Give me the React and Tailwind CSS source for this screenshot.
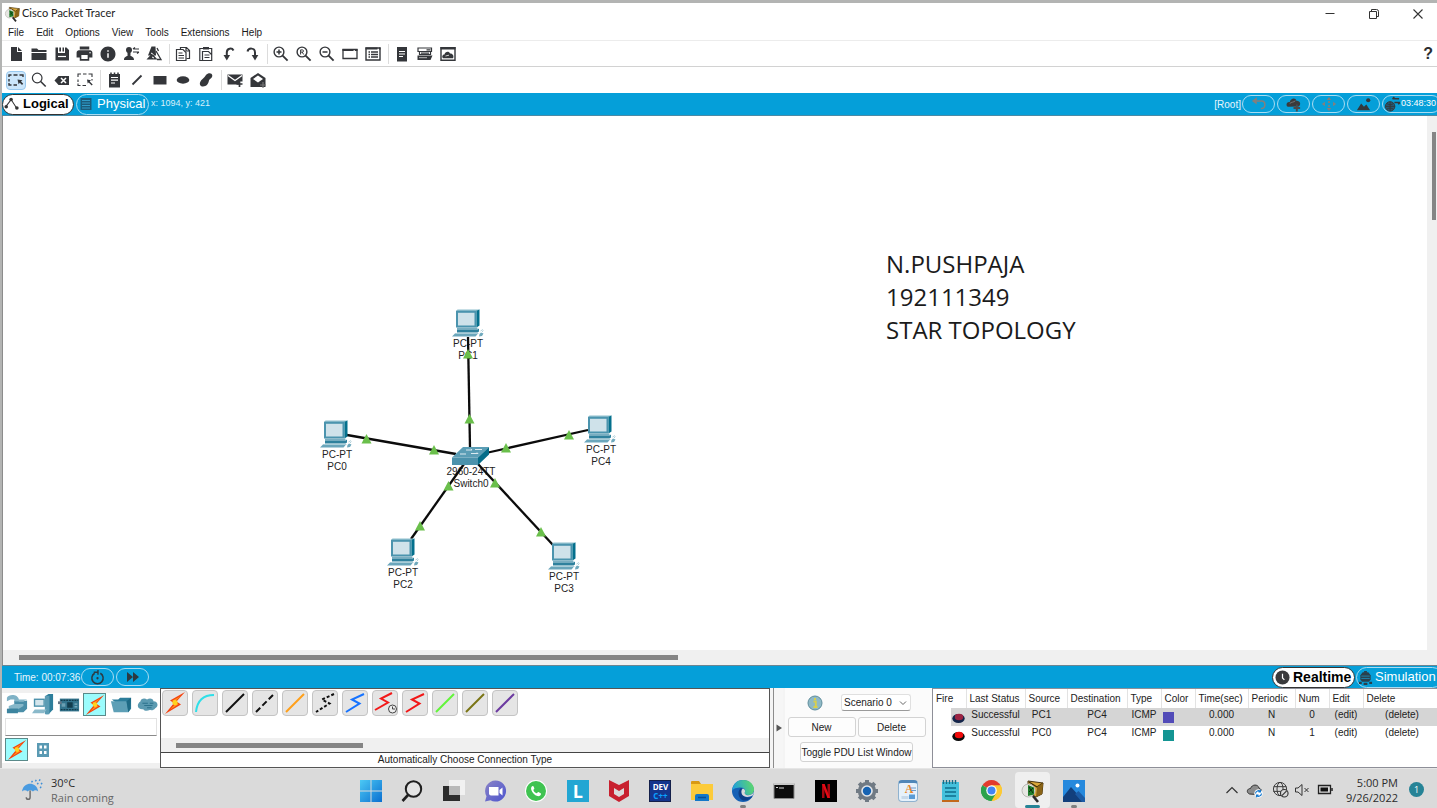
import React from 'react';
import { MdPrint, MdInfo } from 'react-icons/md';
import { FaWhatsapp } from 'react-icons/fa';

const INK = '#34363a';

function Svg({ s = 18, box = 18, children, className }) {
  return (
    <svg
      width={s}
      height={s}
      viewBox={`0 0 ${box} ${box}`}
      fill="none"
      aria-hidden="true"
      className={className || 'shrink-0'}
    >
      {children}
    </svg>
  );
}

/* ---------- toolbar icons ---------- */

const NewIcon = () => (
  <Svg>
    <path d="M4 2h6v5h5v9H4z" fill={INK} />
    <path d="M11 2l4 4h-4z" fill={INK} />
  </Svg>
);
const OpenIcon = () => (
  <Svg>
    <path d="M1.500 3.500h5.500l1.500 1.500h8v2H1.500z" fill={INK} />
    <path d="M1.500 8h15v7h-15z" fill={INK} />
  </Svg>
);
const SaveIcon = () => (
  <Svg>
    <path d="M2.500 2.500H5V8h7V2.500h1.500l2.500 2.500v10.500H2.500z" fill={INK} />
    <path d="M6.300 2.500h1.700v4H6.300zM9.500 2.500h1.500v4H9.500z" fill={INK} />
    <path d="M5 11.500h8" stroke="#fff" strokeWidth="1.200" />
  </Svg>
);
const PrintIcon = () => <MdPrint size={19} color={INK} />;
const InfoIcon = () => <MdInfo size={18} color={INK} />;
const UserIcon = () => (
  <Svg>
    <circle cx="7" cy="5" r="3" fill={INK} />
    <path d="M5.500 6h3v5h-3zM2 15c0-3 2-3.600 5-4.400 3 .8 5 1.400 5 4.400z" fill={INK} />
    <path d="M11 4h6M11 4l2-1.500M11 7h6M17 7l-2 1.500" stroke={INK} strokeWidth="1.200" />
  </Svg>
);
const WizardIcon = () => (
  <Svg>
    <path d="M6.500 1.500l4 0 .5 9H3z" fill={INK} />
    <path d="M1.500 14.500l4-4.500h3l4 4.500z" fill={INK} />
    <path d="M6 8l2.500 1.500M7 12l2 1" stroke="#fff" />
    <path d="M11 6l5 8.500h-4M12 3l1.500 3" stroke={INK} strokeWidth="1.300" />
  </Svg>
);
const CopyIcon = () => (
  <Svg>
    <path d="M6.500 4.500v-2h6l3 3v8h-3M12 2.500v3.500h3.500" stroke={INK} strokeWidth="1.200" />
    <path d="M2.500 4.500h6.500l3 3v8H2.500zM4.500 8h4M4.500 10.500h5.500M4.500 13h5.500" stroke={INK} strokeWidth="1.200" />
  </Svg>
);
const PasteIcon = () => (
  <Svg>
    <path d="M6 3.500H2.800v12H5M11 3.500h3.700v12H5.500v-9h6l3 3" stroke={INK} strokeWidth="1.200" />
    <path d="M6 2h6v2.500H6z" fill={INK} />
    <path d="M7.500 10h5M7.500 12.500h5" stroke={INK} />
  </Svg>
);
const UndoIcon = () => (
  <Svg>
    <path d="M13.500 5.500C12 2.500 6.800 3 6.800 7.500V11" stroke={INK} strokeWidth="2" />
    <path d="M3.500 10h6.600l-3.300 5.500z" fill={INK} />
  </Svg>
);
const RedoIcon = () => (
  <Svg>
    <path d="M4.500 6.500C5.500 2.500 12 2.500 12 7.500V11" stroke={INK} strokeWidth="2" />
    <path d="M8.700 10h6.600L12 15.500z" fill={INK} />
  </Svg>
);
function Lens({ children }) {
  return (
    <Svg>
      <circle cx="7" cy="7" r="4.900" stroke={INK} strokeWidth="1.400" />
      <path d="M10.600 10.600l5 5" stroke={INK} strokeWidth="1.800" />
      {children}
    </Svg>
  );
}
const ZoomInIcon = () => (
  <Lens>
    <path d="M4.500 7h5M7 4.500v5" stroke={INK} strokeWidth="1.500" />
  </Lens>
);
const ZoomOutIcon = () => (
  <Lens>
    <path d="M4.500 7h5" stroke={INK} strokeWidth="1.500" />
  </Lens>
);
const ZoomResetIcon = () => (
  <Lens>
    <path d="M5.600 9.500V4.900h1.900c1.300 0 1.300 2.200 0 2.200H6M7.200 7.100l1.500 2.400" stroke={INK} />
  </Lens>
);
const WindowIcon = () => (
  <Svg>
    <path d="M2 4.500h14v9H2z" stroke={INK} strokeWidth="1.300" />
    <path d="M1.500 4h11v2h-11zM14 4h2.500v2H14z" fill={INK} />
  </Svg>
);
const ListWindowIcon = () => (
  <Svg>
    <path d="M2 3h14v12H2z" stroke={INK} strokeWidth="1.400" />
    <path d="M1.500 2.500h12v2h-12zM15 2.500h1.500v2H15z" fill={INK} />
    <path d="M4.500 7h1.500M7 7h7M4.500 9.500h1.500M7 9.500h7M4.500 12h1.500M7 12h7" stroke={INK} strokeWidth="1.300" />
  </Svg>
);
const NoteIcon = () => (
  <Svg>
    <path d="M4 2h10v14.500H4z" fill={INK} />
    <path d="M6 6.500h6M6 9h6M6 11.500h4" stroke="#fff" strokeWidth="1.100" />
  </Svg>
);
const DevicesIcon = () => (
  <Svg>
    <path d="M2 3h13.500v3.500H2zM3.500 6.500v3h11v-3" stroke={INK} strokeWidth="1.200" />
    <path d="M10.500 4.800h4M5 8.200h8" stroke={INK} strokeWidth="1.300" />
    <path d="M1.500 10.500h15l-2 4.500h-13z" fill={INK} />
    <path d="M3 12.700h8" stroke="#bbb" />
  </Svg>
);
const CloudWindowIcon = () => (
  <Svg>
    <path d="M2 2.800h14v12.500H2z" stroke={INK} strokeWidth="1.400" />
    <path d="M1.500 2h15v2.500h-15z" fill={INK} />
    <path d="M4 13.300c-1.700-2 0-4 1.500-3.800C6 6.300 10.300 6 11 8.500c2.400-.4 4.400 2.500 3 4.800z" fill={INK} />
    <path d="M6.500 11l3.500-.8" stroke="#ccc" />
  </Svg>
);
const SelectIcon = () => (
  <Svg>
    <path
      d="M2 6V4h2.500M6.500 4h4M12.500 4H16v2M2 8v2.500M2 12v2h2.500M6.500 14h3.500"
      stroke={INK}
      strokeWidth="1.400"
    />
    <path d="M10.500 8.500l5 .8-1.500 1.200 2.200 2.300-1.200 1.200-2.200-2.300-1.200 1.500z" fill={INK} />
  </Svg>
);
const InspectIcon = () => (
  <Svg>
    <circle cx="7.200" cy="7" r="4.800" stroke={INK} strokeWidth="1.200" />
    <path d="M10.700 10.500l5 5" stroke={INK} strokeWidth="1.600" />
  </Svg>
);
const DeleteIcon = () => (
  <Svg>
    <path d="M1.500 9.500l4-4.500H16v9H5.500z" fill={INK} />
    <path d="M8 7l5 5M13 7l-5 5" stroke="#fff" strokeWidth="1.500" />
  </Svg>
);
const ResizeIcon = () => (
  <Svg>
    <path
      d="M2 6V3h3M7 3h3.500M12.500 3H16v3M2 8.500v2.500M2 12.500v2h2.500M6.500 14.500h3.500M16 8v1.500"
      stroke={INK}
      strokeWidth="1.100"
    />
    <path d="M11 8.500l4 .8-1.300 1.100 3 3-1 1-3-3-1 1.200z" fill={INK} />
  </Svg>
);
const PlaceNoteIcon = () => (
  <Svg>
    <path d="M4 3h11v13.500H4z" fill={INK} />
    <path d="M6 1.500v2M9.500 1.500v2M13 1.500v2" stroke={INK} strokeWidth="1.500" />
    <path d="M6 6.500h7M6 9.200h7M6 12h4" stroke="#fff" strokeWidth="1.200" />
  </Svg>
);
const LineIcon = () => (
  <Svg>
    <path d="M4.500 13.500l9-9" stroke={INK} strokeWidth="1.800" />
  </Svg>
);
const RectIcon = () => (
  <Svg>
    <path d="M2.500 5h13v8.500h-13z" fill={INK} />
  </Svg>
);
const EllipseIcon = () => (
  <Svg>
    <ellipse cx="9" cy="9" rx="6.300" ry="3.700" fill={INK} />
  </Svg>
);
const FreeformIcon = () => (
  <Svg>
    <path
      d="M9 4c2-2.500 6-2.500 6.300.5.200 2.500-2.500 3-3.300 5-.5 3-2.500 6-6 6-2.500 0-3.800-2-2.800-4.500C4 8.700 7.500 7 9 4z"
      fill={INK}
    />
  </Svg>
);
const MailAddIcon = () => (
  <Svg>
    <path d="M1.500 3.500h15v7h-2.500v3H1.500z" fill={INK} />
    <path d="M2 4.500l7 5 7-5" stroke="#fff" strokeWidth="1.300" />
    <path d="M13.500 10v6M10.500 13h6" stroke={INK} strokeWidth="1.700" />
  </Svg>
);
const MailOpenIcon = () => (
  <Svg>
    <path d="M1.500 7L9 2l7.500 5v9h-15z" fill={INK} />
    <path d="M4 8l5-3.500L14 8l-5 3.500z" fill="#fff" />
    <path d="M14 11v6M11 14h6" stroke="#777" strokeWidth="1.200" />
  </Svg>
);

const mainTools = [
  [
    ['New', NewIcon],
    ['Open', OpenIcon],
    ['Save', SaveIcon],
    ['Print', PrintIcon],
    ['Network information', InfoIcon],
    ['User profile', UserIcon],
    ['Activity wizard', WizardIcon],
  ],
  [
    ['Copy', CopyIcon],
    ['Paste', PasteIcon],
    ['Undo', UndoIcon],
    ['Redo', RedoIcon],
  ],
  [
    ['Zoom in', ZoomInIcon],
    ['Zoom reset', ZoomResetIcon],
    ['Zoom out', ZoomOutIcon],
    ['Viewport', WindowIcon],
    ['Workspace list', ListWindowIcon],
  ],
  [
    ['Command log', NoteIcon],
    ['Custom devices', DevicesIcon],
    ['Cluster view', CloudWindowIcon],
  ],
];

const drawTools = [
  [
    ['Select', SelectIcon],
    ['Inspect', InspectIcon],
    ['Delete', DeleteIcon],
    ['Resize', ResizeIcon],
  ],
  [
    ['Place note', PlaceNoteIcon],
    ['Line', LineIcon],
    ['Rectangle', RectIcon],
    ['Ellipse', EllipseIcon],
    ['Freeform', FreeformIcon],
  ],
  [
    ['Add simple PDU', MailAddIcon],
    ['Add complex PDU', MailOpenIcon],
  ],
];

function ToolGroups({ groups, selected }) {
  return (
    <div className="flex items-center pl-0.5">
      {groups.map((g, i) => (
        <React.Fragment key={i}>
          {i > 0 && <span className="ml-1 mr-px h-5 w-px bg-[#dcdcdc]" />}
          {g.map(([name, Icon]) => (
            <button
              key={name}
              type="button"
              aria-label={name}
              className="flex h-5 w-[23px] items-center justify-center"
            >
              <span
                className={
                  name === selected
                    ? 'flex h-[19px] w-5 items-center justify-center rounded-sm border border-[#99c9ef] bg-[#cce6fb]'
                    : 'flex'
                }
              >
                <Icon />
              </span>
            </button>
          ))}
        </React.Fragment>
      ))}
    </div>
  );
}

function TracerLogo({ s }) {
  return (
    <Svg s={s} box={24}>
      <path d="M8 2l15 2-1 11-6 3-8-4z" fill="#d9a73a" stroke="#4a3510" strokeWidth="1" />
      <path d="M9 3l8 5 6-4" stroke="#3c2a08" strokeWidth="1.200" />
      <path d="M17 8l-1 10 6-3 1-11z" fill="#8a6417" />
      <circle cx="8.500" cy="11.500" r="6.500" fill="#e6e6e2" stroke="#b9b9b4" />
      <path d="M8 6l6 2.500v7L8 17z" fill="#1f7d2c" />
      <path d="M9 8l4 6M9 13l4-4" stroke="#0c2f10" />
      <path d="M13 17l5 6" stroke="#2b2b2b" strokeWidth="2.600" />
    </Svg>
  );
}

/* ---------- workspace ---------- */

const devices = [
  { id: 'PC1', x: 452, y: 309, label: 'left-[465px] top-[222px]' },
  { id: 'PC0', x: 320, y: 420, label: 'left-[334px] top-[333px]' },
  { id: 'PC4', x: 584, y: 415, label: 'left-[598px] top-[328px]' },
  { id: 'PC2', x: 387, y: 538, label: 'left-[400px] top-[451px]' },
  { id: 'PC3', x: 548, y: 542, label: 'left-[561px] top-[455px]' },
];
const links = [
  [468, 337, 470, 448],
  [347, 435, 456, 454],
  [588, 430, 486, 453],
  [411, 539, 464, 464],
  [553, 545, 478, 464],
];
const arrows = [
  [468, 349],
  [469.5, 414],
  [366.5, 434],
  [434, 445],
  [506, 443],
  [569, 430],
  [448.5, 481],
  [420, 521],
  [495, 478],
  [541, 527],
];

function Pc({ x, y }) {
  return (
    <g transform={`translate(${x} ${y})`}>
      <path d="M4 2l1.500-1.500H28L25 2z" fill="#8fbfce" />
      <path d="M4 1.800h20.500V18.500H4z" fill="#4b94ae" />
      <path d="M6 3.800h16.500V16.500H6z" fill="#cfe2ea" />
      <path d="M24.500 1.800L27.500 .5v16l-3 2z" fill="#04708d" />
      <path d="M5 18.500h20.500v2H5z" fill="#79aec1" />
      <path d="M5 20.500h20.500l1.500-1v3l-1.500 1H5z" fill="#2f819d" />
      <path d="M3.500 24H26.500l-3 3.500H0z" fill="#6aa6bb" />
      <path d="M3.500 24H26.500l-.9 1H2.600z" fill="#a9cdd8" />
      <path d="M27.500 25l1.500-1.500 2.500 1-1.500 2.500-3 .5z" fill="#6fa9bd" />
      <path d="M28.500 22l2.500-1.500M30 23l1.500-1.500" stroke="#9fc5d2" strokeWidth=".8" />
    </g>
  );
}

const labelCls =
  'absolute -translate-x-1/2 whitespace-nowrap text-center text-[10px] leading-3 text-[#222]';

function Canvas() {
  return (
    <div className="relative min-w-0 flex-1 overflow-hidden border-l border-[#8c8c8c] bg-white">
      {devices.map((d) => (
        <div key={d.id} className={`${labelCls} ${d.label}`}>
          PC-PT
          <br />
          {d.id}
        </div>
      ))}
      <div className={`${labelCls} left-[468px] top-[350px]`}>
        2960-24TT
        <br />
        Switch0
      </div>
      <svg
        className="absolute left-0 top-0"
        width="700"
        height="534"
        viewBox="3 116 700 534"
        role="img"
        aria-label="Star topology: five PCs linked to Switch0"
      >
        {links.map(([a, b, c, d]) => (
          <path key={`${a}-${b}`} d={`M${a} ${b}L${c} ${d}`} stroke="#0b0b0b" strokeWidth="2.300" />
        ))}
        {devices.map((d) => (
          <Pc key={d.id} x={d.x} y={d.y} />
        ))}
        <path d="M463 447h26l-11 10.500h-26z" fill="#5a9db5" />
        <path d="M452 457.500h26v7.500h-26z" fill="#4b92ac" />
        <path d="M478 457.500L489 447v7.500L478 465z" fill="#066d89" />
        <path d="M466 450h6l-1-1.200M475 449.500h7M460 454h6M471 453.500h7l-1-1" stroke="#dbeaf0" strokeWidth="1" fill="none" />
        {arrows.map(([x, y]) => (
          <path key={`${x}-${y}`} d={`M${x} ${y}l5 9.600h-10z`} fill="#6abf4b" />
        ))}
      </svg>
      <p className="absolute left-[883px] top-[131px] whitespace-nowrap font-['Open_Sans','Noto_Sans',sans-serif] text-[24px] leading-[33px] text-[#1b1b1b]">
        N.PUSHPAJA
        <br />
        192111349
        <br />
        STAR TOPOLOGY
      </p>
    </div>
  );
}

/* ---------- blue bars ---------- */

function Pill({ name, children, wide }) {
  return (
    <button
      type="button"
      aria-label={name}
      className={`flex h-[18px] shrink-0 items-center rounded-full border border-[#a9dcf2] text-white ${
        wide ? '-mr-1 w-[59px] whitespace-nowrap pl-px text-[9px]' : 'w-[33px] justify-center'
      }`}
    >
      {children}
    </button>
  );
}

function TopBar() {
  return (
    <div className="flex h-[23px] items-center overflow-hidden border-b border-[#4b8aa5] bg-[#059fd9] text-[10px]">
      <button
        type="button"
        className="flex h-[21px] w-[72px] items-center gap-[3px] rounded-full border border-[#333] bg-white pl-px text-[13px] font-bold text-black"
      >
        <Svg s={16} box={18}>
          <path d="M2 12L8 4l6.500 10" stroke="#333" strokeWidth="1.200" />
          <circle cx="2.500" cy="12" r="2" fill="#333" />
          <circle cx="8" cy="4" r="2" fill="#333" />
          <circle cx="14.500" cy="13.500" r="2" fill="#333" />
        </Svg>
        Logical
      </button>
      <button
        type="button"
        className="ml-0.5 flex h-[21px] w-[73px] items-center gap-[5px] rounded-full border border-[#a9dcf2] pl-[3px] text-[13px] text-white"
      >
        <Svg s={12} box={12}>
          <path d="M.5 0h11v12H.5z" fill="#1c5b7a" />
          <path d="M2 2.500h8M2 5h8M2 7.500h8M2 10h8" stroke="#2f9cc9" />
        </Svg>
        Physical
      </button>
      <span className="ml-0.5 text-[9px] text-[#d8f0fa]">x: 1094, y: 421</span>
      <span className="ml-auto text-[#e8f6fc]">[Root]</span>
      <div className="ml-px flex gap-0.5">
        <Pill name="Back">
          <Svg s={16}>
            <path d="M6 5.500h6c4.500 0 5 7.500.5 8.500h-1.500" stroke="#857f7c" strokeWidth="1.700" />
            <path d="M1 5.500l5.500-4v8z" fill="#857f7c" />
          </Svg>
        </Pill>
        <Pill name="New cluster">
          <Svg s={17}>
            <path d="M3 11.500c-3-2-.5-6 2-5C6 2 11.500 1.500 12 5c4-.5 5.500 4 2.500 6z" fill="#3a3a3c" />
            <path d="M5 8c2-2 4-1 6-3" stroke="#777" />
            <path d="M12.500 9v7.500M9 12.700h7" stroke="#4a4a4c" strokeWidth="2" />
          </Svg>
        </Pill>
        <Pill name="Move object">
          <Svg s={16}>
            <path
              d="M9 1l2.600 3.400H6.400zM9 17l2.600-3.400H6.400zM1 9l3.400-2.600v5.200zM17 9l-3.400-2.600v5.200zM8 5.500h2v2.500H8zM8 10h2v2.500H8z"
              fill="#857f7c"
            />
          </Svg>
        </Pill>
        <Pill name="Set background">
          <Svg s={17}>
            <path d="M2 15l4.500-7 3 3.500L12 9l4 6z" fill="#33383c" />
            <circle cx="14" cy="4.500" r="2.200" fill="#33383c" />
          </Svg>
        </Pill>
        <Pill name="Environment time" wide>
          <Svg s={17}>
            <circle cx="6.500" cy="11" r="5" fill="#255b76" stroke="#33383c" />
            <path d="M1.500 11h10M6.500 6v10M3 8c2 1.500 5 1.500 7 0M3 14c2-1.500 5-1.500 7 0" stroke="#33383c" />
            <path d="M9 3h7M9 3l2-1.800M11 7h6M17 7l-2 1.800" stroke="#33383c" strokeWidth="1.600" />
          </Svg>
          03:48:30
        </Pill>
      </div>
    </div>
  );
}

function TimeBar() {
  return (
    <div className="flex h-[23px] items-center overflow-hidden border-t border-[#6b8592] bg-[#059fd9] text-[10px] text-[#e8f6fc]">
      <span className="ml-3">Time: 00:07:36</span>
      <div className="ml-px flex gap-0.5">
        <Pill name="Power cycle devices">
          <Svg s={17}>
            <path d="M6 4.500A6 6 0 1 0 12 4.500" stroke="#2c3a42" strokeWidth="1.600" />
            <path d="M5 3.500h5M9.500 1v5" stroke="#2c3a42" strokeWidth="1.500" />
            <circle cx="9" cy="9.800" r="1.200" fill="#2c3a42" />
          </Svg>
        </Pill>
        <Pill name="Fast forward time">
          <Svg s={18}>
            <path d="M3 4l6 5-6 5zM9 4l6 5-6 5z" fill="#2c3a42" />
          </Svg>
        </Pill>
      </div>
      <button
        type="button"
        className="ml-auto flex h-[21px] w-[83px] shrink-0 items-center gap-[3px] rounded-full border border-[#333] bg-white pl-0.5 text-[14px] font-bold text-black"
      >
        <Svg s={15} box={16}>
          <circle cx="8" cy="8" r="7.500" fill="#3a3a3c" />
          <path d="M8 4v4.500l2 2" stroke="#fff" strokeWidth="1.300" />
        </Svg>
        Realtime
      </button>
      <button
        type="button"
        className="-mr-1.5 ml-px flex h-[21px] w-[87px] shrink-0 items-center gap-0.5 whitespace-nowrap rounded-full border border-[#a9dcf2] pl-px text-[13px] text-white"
      >
        <Svg s={15} box={16}>
          <path d="M5 2.500h6l2.500 3v5l-2 2h-7l-2-2v-5z" fill="#2a3f4b" />
          <path d="M3.500 6.500h9M3.500 9h9" stroke="#1c86b2" />
          <path d="M6.500 1h3v2h-3zM1 12.500h3v2.500H1zM6 13.500h4V16H6zM12 12.500h3v2.500h-3z" fill="#2a3f4b" />
        </Svg>
        Simulation
      </button>
    </div>
  );
}

/* ---------- bottom panel ---------- */

function BoltIcon({ s = 22 }) {
  return (
    <Svg s={s} box={24}>
      <path d="M22 1L7 9.500l4 2.500L2 23l16-9.500-4.500-3z" fill="#f5420f" />
      <path d="M18 5L9 9.800l4 2.500-6 6.500 8.500-5.500-4-2.700z" fill="#ff9a1c" />
      <circle cx="12" cy="11.500" r="2.600" fill="#ffd21f" />
    </Svg>
  );
}

const kinds = [
  [
    'Network devices',
    <Svg key="i" s={22} box={24}>
      <path d="M1 4c2-4 12-4 13 2v3H9V6H5L1 8z" fill="#7fb2c6" />
      <path d="M9 8h10l4-1v9l-4 4H3v-4l6-2z" fill="#4a8ea8" />
      <path d="M3 13l6-2h10v2l-5 3H3zM9 8l4-2h10l-4 2z" fill="#86b7c9" />
      <path d="M1 16h12v5H1z" fill="#3c849f" />
    </Svg>,
  ],
  [
    'End devices',
    <Svg key="i" s={22} box={24}>
      <path d="M15 2l3-2h5v17l-5 5h-3z" fill="#2d7e9b" />
      <path d="M14 2h5v20h-5z" fill="#5b9cb4" />
      <path d="M2 5h12v9H2z" fill="#4b91ab" />
      <path d="M3.500 6.500h9v6h-9z" fill="#d4e5ec" />
      <path d="M3 17h13l-3 4H0z" fill="#8ab9ca" />
    </Svg>,
  ],
  [
    'Components',
    <Svg key="i" s={22} box={24}>
      <path d="M2 5h21v14H2z" fill="#33748d" />
      <path d="M10 9h6v6h-6z" fill="#123c4d" />
      <path d="M3 7h19M3 17h19" stroke="#123c4d" strokeWidth="1.500" strokeDasharray="2 1" />
      <path d="M4 11h4M4 13h4M18 11h3M18 14h3" stroke="#9cc6d4" />
      <path d="M0 8h4v3H0z" fill="#678" />
    </Svg>,
  ],
  ['Connections', <BoltIcon key="i" />],
  [
    'Miscellaneous',
    <Svg key="i" s={22} box={24}>
      <path d="M2 6h7l2-2h12v12l-3 4z" fill="#2d7e9b" />
      <path d="M1 8h17l2 12H4z" fill="#5d9fb6" />
      <path d="M18 8l5-4-1 12-2 4z" fill="#1e6a85" />
    </Svg>,
  ],
  [
    'Multiuser connection',
    <Svg key="i" s={22} box={24}>
      <path
        d="M5 8c0-3.500 5-4 7-2 3-2 7-1 7 2 5 0 6 5.500 2 7.500-2 3-5 2-6 2-3 1.500-6 1-7-1-5 1-9-4-3-8.500z"
        fill="#5b9ab1"
      />
      <path d="M7 10h6M9 12.500h9M12 15h5M15 10h4" stroke="#2d728c" strokeWidth="1.100" />
    </Svg>,
  ],
];

const cell = 'flex h-[23px] w-[23px] items-center justify-center';
const cellOn = 'flex h-[23px] w-[23px] items-center justify-center border border-[#5a8a8a] bg-[#9bfcfd]';

function DevicePicker() {
  return (
    <div className="flex w-[158px] shrink-0 flex-col border-y-[5px] border-[#f0f0f0] bg-white">
      <div className="flex gap-[3px] pl-[3px]">
        {kinds.map(([name, icon]) => (
          <button key={name} type="button" aria-label={name} className={name === 'Connections' ? cellOn : cell}>
            {icon}
          </button>
        ))}
      </div>
      <input
        aria-label="Device category"
        readOnly
        className="mx-[3px] mt-0.5 h-[18px] border border-[#e2e2e2] border-b-[#8a8a8a] bg-white outline-none"
      />
      <div className="mt-0.5 flex gap-[3px] pl-[3px]">
        <button type="button" aria-label="All connections" className={cellOn}>
          <BoltIcon />
        </button>
        <button type="button" aria-label="Structured cabling" className={cell}>
          <Svg s={14} box={14}>
            <path d="M1 0h12v14H1z" fill="#5a9ab3" />
            <path d="M3.500 2.500h2.500v3H3.500zM8 2.500h2.500v3H8zM3.500 8h2.500v3H3.500zM8 8h2.500v3H8z" fill="#fff" />
          </Svg>
        </button>
      </div>
    </div>
  );
}

const ZIG = 'M21 3L9 8.500l7.500 4L3 21';
const cables = [
  ['Automatic', <BoltIcon key="i" s={24} />],
  ['Console', <path key="i" d="M3 21C4 11 9 4 21 4" stroke="#2fdfe8" strokeWidth="2" />],
  ['Copper straight-through', <path key="i" d="M3 21L21 3" stroke="#111" strokeWidth="2" />],
  ['Copper cross-over', <path key="i" d="M3 21L21 3" stroke="#111" strokeWidth="2" strokeDasharray="6 3" />],
  ['Fiber', <path key="i" d="M3 21L21 3" stroke="#ff9f1a" strokeWidth="2" />],
  ['Phone', <path key="i" d={ZIG} stroke="#111" strokeWidth="2" strokeDasharray="3 2" />],
  ['Coaxial', <path key="i" d={ZIG} stroke="#1673ff" strokeWidth="2" />],
  [
    'Serial DCE',
    <g key="i">
      <path d="M19 2L8 7.500l7 4L2 19" stroke="#f21818" strokeWidth="2" />
      <circle cx="19.500" cy="18" r="4" fill="#eee" stroke="#444" />
      <path d="M19.500 15.500V18H22" stroke="#444" />
    </g>,
  ],
  ['Serial DTE', <path key="i" d={ZIG} stroke="#f21818" strokeWidth="2" />],
  ['Octal', <path key="i" d="M3 21L21 3" stroke="#62f53a" strokeWidth="2" />],
  ['IoT custom cable', <path key="i" d="M3 21L21 3" stroke="#7a7414" strokeWidth="2" />],
  ['USB', <path key="i" d="M3 21L21 3" stroke="#6c3aa0" strokeWidth="2" />],
];

function CablePicker() {
  return (
    <div className="flex min-w-0 flex-1 flex-col border border-[#555] bg-white">
      <div className="flex flex-1 items-start gap-1 overflow-hidden pl-px pt-px">
        {cables.map(([name, icon]) => (
          <button
            key={name}
            type="button"
            aria-label={name}
            className="flex h-[26px] w-[26px] shrink-0 items-center justify-center rounded border border-[#c4c4c4] bg-[#e5e5e5]"
          >
            {name === 'Automatic' ? icon : <Svg s={24} box={24}>{icon}</Svg>}
          </button>
        ))}
      </div>
      <div className="flex h-[14px] items-center bg-[#f0f0f0] pl-[15px]">
        <div className="h-[5px] w-[187px] bg-[#858585]" />
      </div>
      <div className="flex h-[15px] items-center justify-center border-t border-[#444] text-[10px] leading-3 text-[#222]">
        Automatically Choose Connection Type
      </div>
    </div>
  );
}

const btn =
  'rounded-[3px] border border-[#d3d3d3] bg-[#fdfdfd] h-[20px] text-[10px] text-[#222] whitespace-nowrap';

function ScenarioPanel() {
  return (
    <div className="flex w-[147px] shrink-0 flex-col items-center bg-[#fbfbfb] pt-1.5">
      <div className="flex w-full items-center pl-[22px]">
        <Svg s={16} box={16}>
          <circle cx="8" cy="8" r="7" fill="#8fb9c6" stroke="#5f8d9c" />
          <path d="M6.500 6.500h2.300V12M6.500 12h4M7 4h2" stroke="#d9d04a" strokeWidth="1.800" />
        </Svg>
        <div className="relative ml-[18px]">
          <select
            aria-label="Scenario"
            className="block h-[17px] w-[70px] appearance-none rounded-[3px] border border-[#e0e0e0] border-b-[#9a9a9a] bg-white pl-0.5 text-[10px] leading-3 text-[#222]"
          >
            <option>Scenario 0</option>
          </select>
          <Svg s={8} box={8} className="pointer-events-none absolute right-1 top-[5px]">
            <path d="M1 2.500l3 3 3-3" stroke="#666" />
          </Svg>
        </div>
      </div>
      <div className="mt-1.5 flex gap-0.5 pr-1">
        <button type="button" className={`${btn} w-[68px]`}>
          New
        </button>
        <button type="button" className={`${btn} w-[68px]`}>
          Delete
        </button>
      </div>
      <button type="button" className={`${btn} mr-1 mt-[5px] w-[113px]`}>
        Toggle PDU List Window
      </button>
    </div>
  );
}

const headers = [
  ['Fire', 'w-[33px] text-left'],
  ['Last Status', 'w-[59px] text-left'],
  ['Source', 'w-[42px] text-left'],
  ['Destination', 'w-[60px] text-left'],
  ['Type', 'w-[34px] text-left'],
  ['Color', 'w-[34px] text-left'],
  ['Time(sec)', 'w-[53px] text-left'],
  ['Periodic', 'w-[47px] text-left'],
  ['Num', 'w-[34px] text-left'],
  ['Edit', 'w-[34px] text-left'],
  ['Delete', 'text-left'],
];
const rows = [
  { src: 'PC1', num: 0, color: 'bg-[#524bb8]', on: true },
  { src: 'PC0', num: 1, color: 'bg-[#149593]', on: false },
];

function PduTable() {
  return (
    <div className="w-[505px] shrink-0 overflow-hidden border border-r-0 border-[#8e8f98] bg-white">
      <table className="w-full table-fixed border-collapse text-[10px] leading-[14px] text-[#222]">
        <thead>
          <tr className="h-[19px]">
            {headers.map(([h, w]) => (
              <th
                key={h}
                scope="col"
                className={`${w} whitespace-nowrap border-r border-[#e3e3e3] p-0 pl-[3px] pt-px font-normal last:border-r-0`}
              >
                {h}
              </th>
            ))}
          </tr>
        </thead>
        <tbody>
          {rows.map((r) => {
            const bg = r.on ? 'bg-[#d5d5d5]' : 'bg-white';
            const c = `${bg} p-0 text-center align-top`;
            return (
              <tr key={r.src} className="h-[18px]">
                <td className="p-0 align-top">
                  <div className={`${bg} ml-[18px] flex h-[18px] items-center justify-center`}>
                    <button type="button" aria-label={`Fire ${r.src}`}>
                      <Svg s={13} box={13}>
                        <ellipse cx="6.500" cy="7.500" rx="6.200" ry="4.500" fill={r.on ? '#14264a' : '#0a0a0a'} />
                        <ellipse cx="7" cy="6" rx="4.200" ry="3.300" fill={r.on ? '#9c2443' : '#f00a0a'} />
                      </Svg>
                    </button>
                  </div>
                </td>
                <td className={c}>Successful</td>
                <td className={c}>
                  <span className="mr-[9px]">{r.src}</span>
                </td>
                <td className={c}>PC4</td>
                <td className={c}>ICMP</td>
                <td className={`${c} pl-0.5 pt-1`}>
                  <div className={`h-[11px] w-[11px] ${r.color}`} />
                </td>
                <td className={c}>0.000</td>
                <td className={c}>N</td>
                <td className={c}>{r.num}</td>
                <td className={c}>(edit)</td>
                <td className={`${c} pl-1`}>(delete)</td>
              </tr>
            );
          })}
        </tbody>
      </table>
    </div>
  );
}

/* ---------- taskbar ---------- */

const apps = [
  [
    'Start',
    <Svg key="i" s={22} box={22}>
      <defs>
        <linearGradient id="win" x1="0" y1="0" x2="1" y2="1">
          <stop offset="0" stopColor="#4cc9f5" />
          <stop offset="1" stopColor="#0a6fd0" />
        </linearGradient>
      </defs>
      <path d="M0 0h10.500v10.500H0zM11.500 0H22v10.500H11.500zM0 11.500h10.500V22H0zM11.500 11.500H22V22H11.500z" fill="url(#win)" />
    </Svg>,
  ],
  [
    'Search',
    <Svg key="i" s={22} box={22}>
      <circle cx="12.500" cy="9" r="7.700" stroke="#1f1f1f" strokeWidth="2" fill="#e4e4e4" />
      <path d="M7 15l-5.500 6" stroke="#1f1f1f" strokeWidth="2.600" />
    </Svg>,
  ],
  [
    'Task view',
    <Svg key="i" s={24} box={24}>
      <path d="M1 7h17v15H1z" fill="#2b2b2b" />
      <path d="M7 1h16v15H7z" fill="#f4f4f4" fillOpacity=".85" />
      <path d="M7 7h11v9H7z" fill="#b9b9b9" />
    </Svg>,
  ],
  [
    'Chat',
    <Svg key="i" s={24} box={24}>
      <defs>
        <linearGradient id="chat" x1="0" y1="0" x2="1" y2="1">
          <stop offset="0" stopColor="#8a83c6" />
          <stop offset="1" stopColor="#4d55cf" />
        </linearGradient>
      </defs>
      <path d="M12.500 1.500a10.500 10.500 0 1 1-5 19.700L2 22.500l1.500-5.200A10.500 10.500 0 0 1 12.500 1.500z" fill="url(#chat)" />
      <path d="M6 8h9.500v8.500H8A2 2 0 0 1 6 14.500z" fill="#fff" />
      <path d="M16.500 11l3-2.500v8l-3-2.500z" fill="#fff" />
    </Svg>,
  ],
  [
    'WhatsApp',
    <span key="i" className="flex h-[22px] w-[22px] items-center justify-center rounded-full bg-white">
      <span className="flex h-5 w-5 items-center justify-center rounded-full bg-[#3fc351]">
        <Svg s={16} box={24}>
          <path
            d="M7 4.500c-2 1-3 3-2 6 1.500 4.500 5 8 9 9 3 .8 5-.5 5.500-3 .2-1-.5-1.400-4-3-1-.4-1.800 2-2.500 2-2.500-.8-4.500-3-5-5 0-.8 1.700-1.500 1.500-2.400-1-2.800-1.200-3.800-2.500-3.600z"
            fill="#fff"
          />
        </Svg>
      </span>
    </span>,
  ],
  [
    'L',
    <span
      key="i"
      className="flex h-[22px] w-[22px] items-center justify-center bg-[#22a6d3] font-['Open_Sans',sans-serif] text-[18px] font-bold leading-none text-white"
    >
      L
    </span>,
  ],
  [
    'McAfee',
    <Svg key="i" s={24} box={24}>
      <path d="M2 1l10 5 10-5v16l-10 6L2 17z" fill="#c8202f" />
      <path d="M7 9l5 3 5-3v6l-5 3-5-3z" fill="#dadada" />
    </Svg>,
  ],
  [
    'Dev-C++',
    <span
      key="i"
      className="flex h-[22px] w-[22px] flex-col items-center justify-center overflow-hidden border border-[#14204a] bg-[#14358c] font-['Open_Sans',sans-serif] text-[8px] font-bold leading-[9px] text-white"
    >
      <span>DEV</span>
      <span className="text-[#0aa0ff]">C++</span>
    </span>,
  ],
  [
    'File Explorer',
    <Svg key="i" s={24} box={24}>
      <path d="M1 3a1 1 0 0 1 1-1h7l2 3H1z" fill="#d99a12" />
      <path d="M1 5h22v16H1z" fill="#fccb3a" />
      <path d="M5 22v-5a2 2 0 0 1 2-2h10a2 2 0 0 1 2 2v5z" fill="#1478c8" />
      <path d="M8 18.500h8" stroke="#0a4f92" strokeWidth="1.500" />
    </Svg>,
  ],
  [
    'Edge',
    <Svg key="i" s={24} box={24}>
      <defs>
        <linearGradient id="edge" x1="0" y1="0.500" x2="1" y2="0.300">
          <stop offset="0" stopColor="#1e9de0" />
          <stop offset="1" stopColor="#5fd96a" />
        </linearGradient>
      </defs>
      <circle cx="12" cy="12" r="11" fill="#1560b5" />
      <path d="M1 12C2 4 7 1 12 1c7 0 11 5 11 9.500 0 4-3 5.500-6 5.500-2.500 0-4-1-3.500-2 1.500-2 .5-5.500-3.500-5.500S2 9.500 1 12z" fill="url(#edge)" />
      <path d="M10 9c-3 2-4 8 1 12 4 1.500 8-.5 10.500-3.500-4 2-10 1-9.500-4 .5-2-.5-4-2-4.500z" fill="#0c3f88" />
      <path d="M13.500 14c1.500-2 0-4-1.500-4.500-2 1-2 4-1 6 2 3 7 3 10.500 1 1-1 1.500-3 1.500-4-1.500 4.500-8.500 5-9.500 1.500z" fill="#dadada" />
    </Svg>,
    'dot',
  ],
  [
    'Command Prompt',
    <Svg key="i" s={22} box={22}>
      <path d="M1 3.500h20v15H1z" fill="#0d0d0d" stroke="#8a8a8a" />
      <path d="M1 3h20v2H1z" fill="#c9c9c9" />
      <path d="M3 7.500h2M6 8h5" stroke="#ddd" />
    </Svg>,
  ],
  [
    'Netflix',
    <span key="i" className="flex h-[22px] w-[22px] items-center justify-center bg-black">
      <Svg s={16} box={16}>
        <path d="M4 1h2.500v14H4zM9.500 1H12v14H9.500z" fill="#a5070f" />
        <path d="M4 1h2.600L12 15H9.400z" fill="#e50914" />
      </Svg>
    </span>,
  ],
  [
    'Settings',
    <Svg key="i" s={24} box={24}>
      <circle cx="12" cy="12" r="7" stroke="#707a84" strokeWidth="4.500" />
      <path
        d="M12 1v22M1 12h22M4.200 4.200l15.600 15.600M19.800 4.200L4.200 19.800"
        stroke="#707a84"
        strokeWidth="4"
      />
      <circle cx="12" cy="12" r="5.800" fill="#e3e6ea" />
      <circle cx="12" cy="12" r="4.200" fill="#1663b3" />
    </Svg>,
  ],
  [
    'WordPad',
    <span key="i" className="relative flex h-[22px] w-5 flex-col rounded-sm border border-[#8fb2cf] border-t-[3px] border-t-[#4f86b8] bg-[#e6f1fb] pl-px">
      <span className="font-['Liberation_Serif',serif] text-[12px] font-bold leading-[12px] text-[#e8862a]">A</span>
      <Svg s={16} box={16} className="absolute left-px top-px">
        <path d="M10.500 4H16M11 6.500h5" stroke="#6d9cc8" />
        <path d="M1.500 12h7v3h-7z" fill="#c7d9ea" />
        <path d="M9 10.500h6V15H9z" fill="#5a9bd5" />
      </Svg>
    </span>,
  ],
  [
    'Notepad',
    <Svg key="i" s={24} box={24}>
      <path d="M4 3h17v18H4z" fill="#44c1dc" />
      <path d="M4 21h17v2H4z" fill="#c2691b" />
      <path d="M5.500 1v4M8.500 1v4M11.500 1v4M14.500 1v4M17.500 1v4" stroke="#1b6c86" strokeWidth="1.400" />
      <path d="M7 9h11M7 13h11M7 17h11" stroke="#0e6d8c" strokeWidth="1.500" />
    </Svg>,
  ],
  [
    'Chrome',
    <Svg key="i" s={21} box={24}>
      <path d="M12 12L1.610 6A12 12 0 0 1 22.390 6z" fill="#e33b2e" />
      <path d="M12 12l10.390-6A12 12 0 0 1 12 24z" fill="#fcc934" />
      <path d="M12 12v12A12 12 0 0 1 1.610 6z" fill="#2ba24c" />
      <path d="M12 6h10.390A12 12 0 0 1 12 24l5.200-9z" fill="#fcc934" />
      <path d="M6.800 15L1.610 6A12 12 0 0 0 12 24l5.200-9z" fill="#2ba24c" />
      <circle cx="12" cy="12" r="6" fill="#fff" />
      <circle cx="12" cy="12" r="4.600" fill="#4285f4" />
    </Svg>,
  ],
  ['Cisco Packet Tracer', <TracerLogo key="i" s={24} />, 'active'],
  [
    'Photos',
    <Svg key="i" s={22} box={22}>
      <path d="M0 0h22v22H0z" fill="#2689dd" />
      <path d="M0 17l8-10 13.500 15H0z" fill="#123f7c" />
      <path d="M12 14l3.500-3 6.500 7v4h-3z" fill="#1b5ba6" />
      <circle cx="14.500" cy="5.500" r="2" fill="#fff" />
    </Svg>,
    'dot',
  ],
];

function Taskbar() {
  return (
    <footer className="flex h-10 shrink-0 items-stretch border-t border-[#e6e6e6] bg-[#dadada] pl-[7px] font-['Open_Sans','Noto_Sans',sans-serif] text-[11px] text-[#2a2a2a]">
      <div className="flex min-w-0 flex-1 items-center gap-[7px] overflow-hidden pl-[14px] pt-0.5">
        <Svg s={23} box={24}>
          <path d="M1 14C2 8 6 6 9.500 6S17 8 18 14c-2-1.500-4-1.500-5.500 0-2-1.500-4-1.500-5.500 0-2-1.500-4-1.500-6 0z" fill="#4a9be0" />
          <path d="M9.500 13v7c0 3-4 3-4 0" stroke="#6b6b6b" strokeWidth="1.500" />
          <path d="M12 3l-1 1.500M16 2l-1 1.500M20 1.500l-1 1.500M18 5l-1 1.500M22 5l-1 1.500M21 9l-1 1.500" stroke="#3c8fd8" strokeWidth="1.500" />
        </Svg>
        <div className="whitespace-nowrap leading-[15px]">
          <div>30°C</div>
          <div className="text-[#666]">Rain coming</div>
        </div>
      </div>
      <nav aria-label="Applications" className="grid w-[744px] shrink-0 grid-cols-18">
        {apps.map(([name, icon, state]) => (
          <button key={name} type="button" aria-label={name} className="relative flex items-center justify-center pt-1">
            {state === 'active' && <span className="absolute inset-x-[3px] bottom-0 top-[3px] rounded bg-[#efefef]" />}
            <span className="relative flex">{icon}</span>
            {state === 'dot' && <span className="absolute bottom-0 h-[3px] w-1.5 rounded-full bg-[#808080]" />}
            {state === 'active' && <span className="absolute bottom-0 h-[3px] w-[15px] rounded-full bg-[#268396]" />}
          </button>
        ))}
      </nav>
      <div className="flex min-w-0 flex-1 items-center justify-end pr-[13px] pt-0.5">
        <Svg s={14} box={14}>
          <path d="M1.500 10L7 4.500l5.500 5.500" stroke="#333" strokeWidth="1.200" />
        </Svg>
        <Svg s={18} className="ml-[7px] shrink-0">
          <path d="M3.500 13C0 11.500 1 7.500 4.500 7.500 6 3 12 3 13 7l3 2.500-5 4z" fill="#8c8c8c" stroke="#333" />
          <circle cx="12.500" cy="12.500" r="4.200" fill="#fff" />
          <path d="M9.500 12.500a3 3 0 0 1 5-2M15.500 12.500a3 3 0 0 1-5 2M14.500 8.800v2h-2M10.500 16.200v-2h2" stroke="#1579cf" strokeWidth="1.200" />
        </Svg>
        <Svg s={17} className="ml-2 shrink-0">
          <circle cx="8.500" cy="8.500" r="7" stroke="#333" />
          <ellipse cx="8.500" cy="8.500" rx="3.200" ry="7" stroke="#333" />
          <path d="M2 6h13M1.500 11h9" stroke="#333" />
          <circle cx="13" cy="13" r="4" fill="#dadada" stroke="#333" strokeWidth="1.200" />
          <path d="M10.500 15.500l5-5" stroke="#333" strokeWidth="1.200" />
        </Svg>
        <Svg s={16} box={16} className="ml-[5px] shrink-0">
          <path d="M1.500 6h2.500l4-3.500v11L4 10H1.500z" stroke="#333" />
          <path d="M10.500 6l4 4M14.500 6l-4 4" stroke="#333" />
        </Svg>
        <Svg s={17} box={17} className="ml-[7px] shrink-0">
          <path d="M1.500 4.500h12v8h-12z" stroke="#222" strokeWidth="1.300" />
          <path d="M3.500 6.500h7.500v4H3.500z" fill="#111" />
          <path d="M15 7v3" stroke="#222" strokeWidth="1.500" />
        </Svg>
        <div className="ml-3 whitespace-nowrap text-right leading-[15px]">
          <div>5:00 PM</div>
          <div>9/26/2022</div>
        </div>
        <span className="ml-[11px] flex h-[15px] w-[15px] items-center justify-center rounded-full bg-[#268396] text-[9px] leading-none text-white">
          1
        </span>
      </div>
    </footer>
  );
}

/* ---------- page ---------- */

const menus = ['File', 'Edit', 'Options', 'View', 'Tools', 'Extensions', 'Help'];

export default function App() {
  return (
    <div className="flex min-h-screen flex-col overflow-hidden bg-white font-['Liberation_Sans',Arial,sans-serif]">
      <main className="flex min-w-0 flex-1 flex-col border-l-2 border-t-[3px] border-[#b3b4b3]">
        <header className="flex h-[21px] items-center pl-0.5">
          <TracerLogo s={16} />
          <h1 className="ml-0.5 font-['Lato','Open_Sans',sans-serif] text-[11px] text-[#222]">Cisco Packet Tracer</h1>
          <div className="ml-auto flex gap-[30px] pr-3">
            <button type="button" aria-label="Minimize">
              <Svg s={14} box={14}>
                <path d="M2.500 6.500h9" stroke="#333" />
              </Svg>
            </button>
            <button type="button" aria-label="Restore">
              <Svg s={14} box={14}>
                <path d="M2.500 4.500h7v7h-7zM4.500 4.500v-2h5a2 2 0 0 1 2 2v5h-2" stroke="#333" />
              </Svg>
            </button>
            <button type="button" aria-label="Close">
              <Svg s={14} box={14}>
                <path d="M2.500 2.500l9 9M11.500 2.500l-9 9" stroke="#333" strokeWidth="1.100" />
              </Svg>
            </button>
          </div>
        </header>
        <nav aria-label="Menu" className="flex h-[17px] items-center gap-3 border-b border-[#ececec] pl-1.5 text-[10px] text-[#1a1a1a]">
          {menus.map((m) => (
            <button key={m} type="button">
              {m}
            </button>
          ))}
        </nav>
        <div className="flex h-[26px] items-center justify-between border-b border-[#d2d2d2] pr-1">
          <ToolGroups groups={mainTools} />
          <button type="button" aria-label="Help" className="text-[16px] font-bold leading-none text-[#2b2d30]">
            ?
          </button>
        </div>
        <div className="flex h-[26px] items-center">
          <ToolGroups groups={drawTools} selected="Select" />
        </div>
        <TopBar />
        <section aria-label="Workspace" className="flex min-h-[534px] flex-1">
          <Canvas />
          <div className="flex w-[10px] justify-end bg-[#f0f0f0] pr-px pt-4">
            <div className="h-[88px] w-1 bg-[#858585]" />
          </div>
        </section>
        <div className="flex h-[15px] items-center border-l border-[#8c8c8c] bg-[#f0f0f0] pl-4">
          <div className="h-[5px] w-[46.5%] bg-[#858585]" />
        </div>
        <TimeBar />
        <div className="flex h-20 items-stretch bg-[#f4f4f4]">
          <DevicePicker />
          <CablePicker />
          <button
            type="button"
            aria-label="Collapse panel"
            className="ml-[3px] mr-[2px] flex w-[10px] shrink-0 items-center justify-center border-l border-[#8c8c8c] bg-[#f6f6f6]"
          >
            <Svg s={8} box={8}>
              <path d="M1.500 0.500L7 4 1.500 7.500z" fill="#555" />
            </Svg>
          </button>
          <ScenarioPanel />
          <PduTable />
        </div>
      </main>
      <Taskbar />
    </div>
  );
}
